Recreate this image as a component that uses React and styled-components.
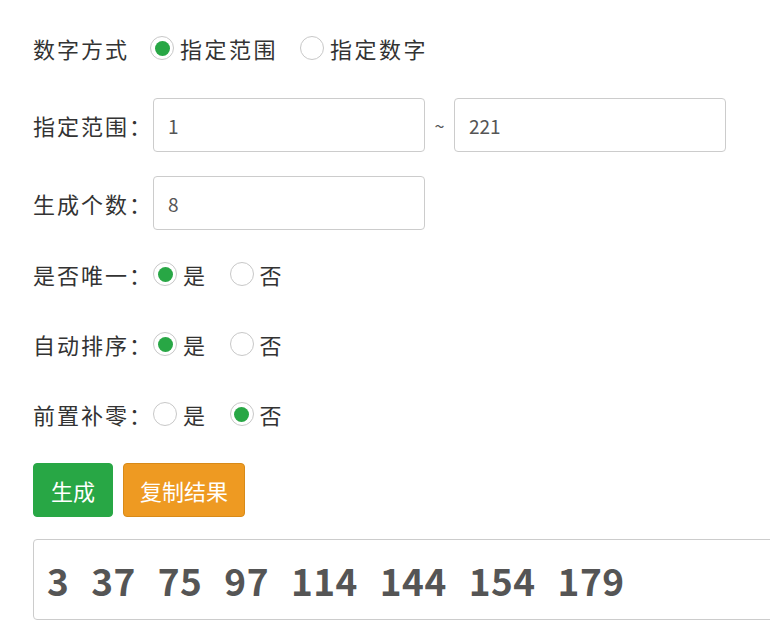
import React from "react";
import styled, { createGlobalStyle } from "styled-components";

const GlobalStyle = createGlobalStyle`
  html, body {
    margin: 0;
    padding: 0;
    background: #fff;
    overflow: hidden;
  }
  body {
    font-family: "Noto Sans CJK SC", "Noto Sans", sans-serif;
    color: #333;
  }
`;

const Page = styled.div`
  padding: 28px 0 0 33px;
  width: 770px;
  box-sizing: border-box;
`;

const Row = styled.div`
  display: flex;
  align-items: center;
  height: ${(p) => (p.$tall ? "54px" : "40px")};
  margin-bottom: ${(p) => (p.$tall ? "24px" : "30px")};
`;

const Label = styled.span`
  font-size: 22px;
  line-height: 1;
  letter-spacing: 2px;
  white-space: nowrap;
  width: ${(p) => p.$w || "120px"};
  flex-shrink: 0;
`;

const Option = styled.label`
  display: flex;
  align-items: center;
  margin-right: 22px;
  font-size: 22px;
  line-height: 1;
  letter-spacing: 2.5px;
  white-space: nowrap;
`;

const Radio = styled.span`
  width: 24px;
  height: 24px;
  box-sizing: border-box;
  border: 1px solid #c8c8c8;
  border-radius: 50%;
  display: flex;
  align-items: center;
  justify-content: center;
  margin-right: 6px;
  &::after {
    content: "";
    width: 15px;
    height: 15px;
    border-radius: 50%;
    background: ${(p) => (p.$checked ? "#28a745" : "transparent")};
  }
`;

const Input = styled.div`
  width: 272px;
  height: 54px;
  box-sizing: border-box;
  border: 1px solid #ccc;
  border-radius: 4px;
  display: flex;
  align-items: center;
  padding-left: 14px;
  font-size: 19px;
  color: #555;
`;

const Tilde = styled.span`
  width: 29px;
  text-align: center;
  font-size: 18px;
  color: #555;
`;

const Buttons = styled.div`
  display: flex;
  gap: 10px;
  margin-top: -1px;
  margin-bottom: 22px;
`;

const Button = styled.button`
  height: 54px;
  padding: 0 ${(p) => p.$px || "17px"};
  border: 1px solid ${(p) => p.$border};
  border-radius: 4px;
  background: ${(p) => p.$bg};
  color: #fff;
  font-family: inherit;
  font-size: 22px;
  cursor: pointer;
`;

const Result = styled.div`
  width: 760px;
  height: 81px;
  box-sizing: border-box;
  border: 1px solid #ccc;
  border-radius: 4px;
  display: flex;
  align-items: center;
  padding-left: 13px;
  font-size: 37px;
  font-weight: 700;
  color: #555;
  word-spacing: 13px;
  letter-spacing: 0.5px;
  white-space: nowrap;
`;

const RadioOption = ({ checked, children }) => (
  <Option>
    <Radio $checked={checked} />
    {children}
  </Option>
);

export default function App() {
  return (
    <Page>
      <GlobalStyle />
      <Row>
        <Label $w="117px">数字方式</Label>
        <RadioOption checked>指定范围</RadioOption>
        <RadioOption>指定数字</RadioOption>
      </Row>
      <Row $tall>
        <Label>指定范围：</Label>
        <Input>1</Input>
        <Tilde>~</Tilde>
        <Input>221</Input>
      </Row>
      <Row $tall>
        <Label>生成个数：</Label>
        <Input>8</Input>
      </Row>
      <Row>
        <Label>是否唯一：</Label>
        <RadioOption checked>是</RadioOption>
        <RadioOption>否</RadioOption>
      </Row>
      <Row>
        <Label>自动排序：</Label>
        <RadioOption checked>是</RadioOption>
        <RadioOption>否</RadioOption>
      </Row>
      <Row>
        <Label>前置补零：</Label>
        <RadioOption>是</RadioOption>
        <RadioOption checked>否</RadioOption>
      </Row>
      <Buttons>
        <Button $bg="#28a745" $border="#28a745">生成</Button>
        <Button $bg="#ee9a22" $border="#d88a18" $px="16px">复制结果</Button>
      </Buttons>
      <Result>3 37 75 97 114 144 154 179</Result>
    </Page>
  );
}
